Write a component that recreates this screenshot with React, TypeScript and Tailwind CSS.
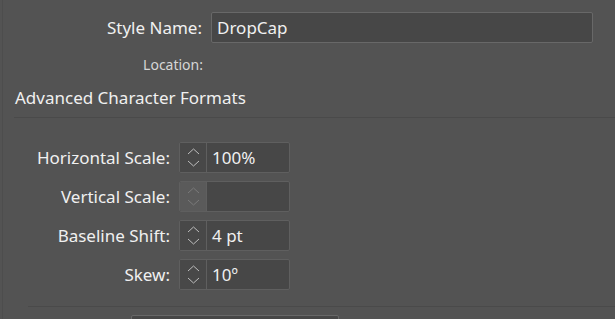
const rows = [
  { label: "Horizontal Scale:", value: "100%", disabled: false },
  { label: "Vertical Scale:", value: "", disabled: true },
  { label: "Baseline Shift:", value: "4 pt", disabled: false },
  { label: "Skew:", value: "10º", disabled: false },
];

function Stepper({ disabled }: { disabled: boolean }) {
  const stroke = disabled ? "#7a7a7a" : "#bdbdbd";
  return (
    <div
      className={`flex h-full w-[27px] flex-col items-center justify-center gap-[5px] border-r border-[#5f5f5f] ${
        disabled ? "bg-[#5a5a5a]" : "bg-[#484848]"
      }`}
    >
      <svg width="13" height="7" viewBox="0 0 13 7" fill="none">
        <path d="M1 6L6.5 1L12 6" stroke={stroke} strokeWidth="1" />
      </svg>
      <svg width="13" height="7" viewBox="0 0 13 7" fill="none">
        <path d="M1 1L6.5 6L12 1" stroke={stroke} strokeWidth="1" />
      </svg>
    </div>
  );
}

export default function App() {
  return (
    <div
      className="relative h-[319px] w-[615px] overflow-hidden bg-[#535353] text-[#f0f0f0]"
      style={{ fontFamily: '"Noto Sans", "Open Sans", sans-serif' }}
    >
      <div className="ml-[2px] h-full border-l border-[#4d4d4d]">
        {/* Style name */}
        <div className="flex items-center pt-[12px]">
          <span className="w-[199px] text-right text-[17px] leading-[30px]">Style Name:</span>
          <div className="ml-[9px] flex h-[31px] w-[382px] items-center rounded-[2px] border border-[#686868] bg-[#474747] px-[5px] text-[17px]">
            DropCap
          </div>
        </div>

        {/* Location */}
        <div className="mt-[12px] w-[200px] text-right text-[14px] leading-[19px] text-[#d6d6d6]">Location:</div>

        {/* Section header */}
        <div className="mt-[12px] pl-[12px] text-[17px] leading-[23px]">Advanced Character Formats</div>
        <div className="ml-[11px] mt-[8px] border-t border-[#4a4a4a]" />

        {/* Rows */}
        <div className="mt-[24px] flex flex-col gap-[8px]">
          {rows.map((r) => (
            <div key={r.label} className="flex items-center">
              <span className="w-[167px] text-right text-[17px]">{r.label}</span>
              <div className="ml-[9px] flex h-[31px] w-[111px] overflow-hidden rounded-[2px] border border-[#5f5f5f] bg-[#474747]">
                <Stepper disabled={r.disabled} />
                <div className="flex flex-1 items-center px-[5px] text-[17px]">{r.value}</div>
              </div>
            </div>
          ))}
        </div>

        <div className="ml-[25px] mt-[16px] border-t border-[#4a4a4a]" />
        <div className="ml-[128px] mt-[8px] h-[20px] w-[208px] rounded-[2px] border border-[#686868] bg-[#474747]" />
      </div>
    </div>
  );
}
